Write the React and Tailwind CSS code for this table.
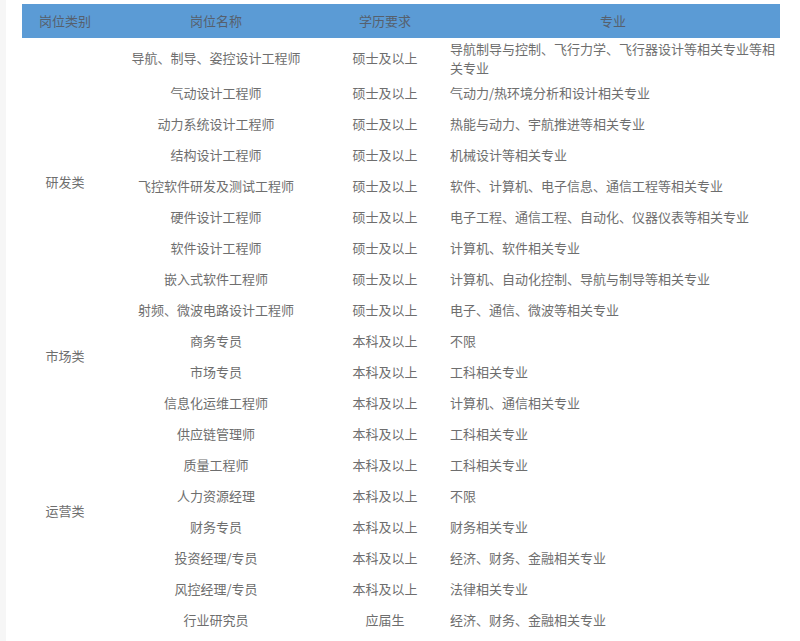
import React from "react";

const groups = [
  {
    cat: "研发类",
    rows: [
      ["导航、制导、姿控设计工程师", "硕士及以上", "导航制导与控制、飞行力学、飞行器设计等相关专业等相关专业"],
      ["气动设计工程师", "硕士及以上", "气动力/热环境分析和设计相关专业"],
      ["动力系统设计工程师", "硕士及以上", "热能与动力、宇航推进等相关专业"],
      ["结构设计工程师", "硕士及以上", "机械设计等相关专业"],
      ["飞控软件研发及测试工程师", "硕士及以上", "软件、计算机、电子信息、通信工程等相关专业"],
      ["硬件设计工程师", "硕士及以上", "电子工程、通信工程、自动化、仪器仪表等相关专业"],
      ["软件设计工程师", "硕士及以上", "计算机、软件相关专业"],
      ["嵌入式软件工程师", "硕士及以上", "计算机、自动化控制、导航与制导等相关专业"],
      ["射频、微波电路设计工程师", "硕士及以上", "电子、通信、微波等相关专业"],
    ],
  },
  {
    cat: "市场类",
    rows: [
      ["商务专员", "本科及以上", "不限"],
      ["市场专员", "本科及以上", "工科相关专业"],
    ],
  },
  {
    cat: "运营类",
    rows: [
      ["信息化运维工程师", "本科及以上", "计算机、通信相关专业"],
      ["供应链管理师", "本科及以上", "工科相关专业"],
      ["质量工程师", "本科及以上", "工科相关专业"],
      ["人力资源经理", "本科及以上", "不限"],
      ["财务专员", "本科及以上", "财务相关专业"],
      ["投资经理/专员", "本科及以上", "经济、财务、金融相关专业"],
      ["风控经理/专员", "本科及以上", "法律相关专业"],
      ["行业研究员", "应届生", "经济、财务、金融相关专业"],
    ],
  },
];

export default function App() {
  let first = true;
  return (
    <div
      className="flex w-[800px] h-[641px] bg-white overflow-hidden"
      style={{ fontFamily: '"Noto Sans CJK SC", "Noto Sans", sans-serif' }}
    >
      <div className="w-[6px] shrink-0 bg-[#f6f6f6]" />
      <div className="pl-[16px] pt-[4px]">
        <table className="table-fixed border-collapse w-[758px] text-[13px] text-[#6e6e6e]">
          <colgroup>
            <col className="w-[86px]" />
            <col className="w-[216px]" />
            <col className="w-[122px]" />
            <col className="w-[334px]" />
          </colgroup>
          <thead>
            <tr className="bg-[#5b9bd5] h-[34px] text-[#56606d]">
              <th className="font-normal text-center p-0">岗位类别</th>
              <th className="font-normal text-center p-0">岗位名称</th>
              <th className="font-normal text-center p-0">学历要求</th>
              <th className="font-normal text-center p-0">专业</th>
            </tr>
          </thead>
          <tbody className="leading-[20px]">
            {groups.map((g) =>
              g.rows.map((r, i) => {
                const isFirst = first;
                first = false;
                return (
                  <tr key={g.cat + i} className={isFirst ? "h-[39px]" : "h-[31px]"}>
                    {i === 0 && (
                      <td rowSpan={g.rows.length} className="text-center align-middle p-0">
                        {g.cat}
                      </td>
                    )}
                    <td className="text-center align-middle p-0">{r[0]}</td>
                    <td className="text-center align-middle p-0">{r[1]}</td>
                    <td className={"text-left align-middle py-0 pl-[4px] pr-[4px] " + (isFirst ? "leading-[19px]" : "")}>{r[2]}</td>
                  </tr>
                );
              })
            )}
          </tbody>
        </table>
      </div>
    </div>
  );
}
